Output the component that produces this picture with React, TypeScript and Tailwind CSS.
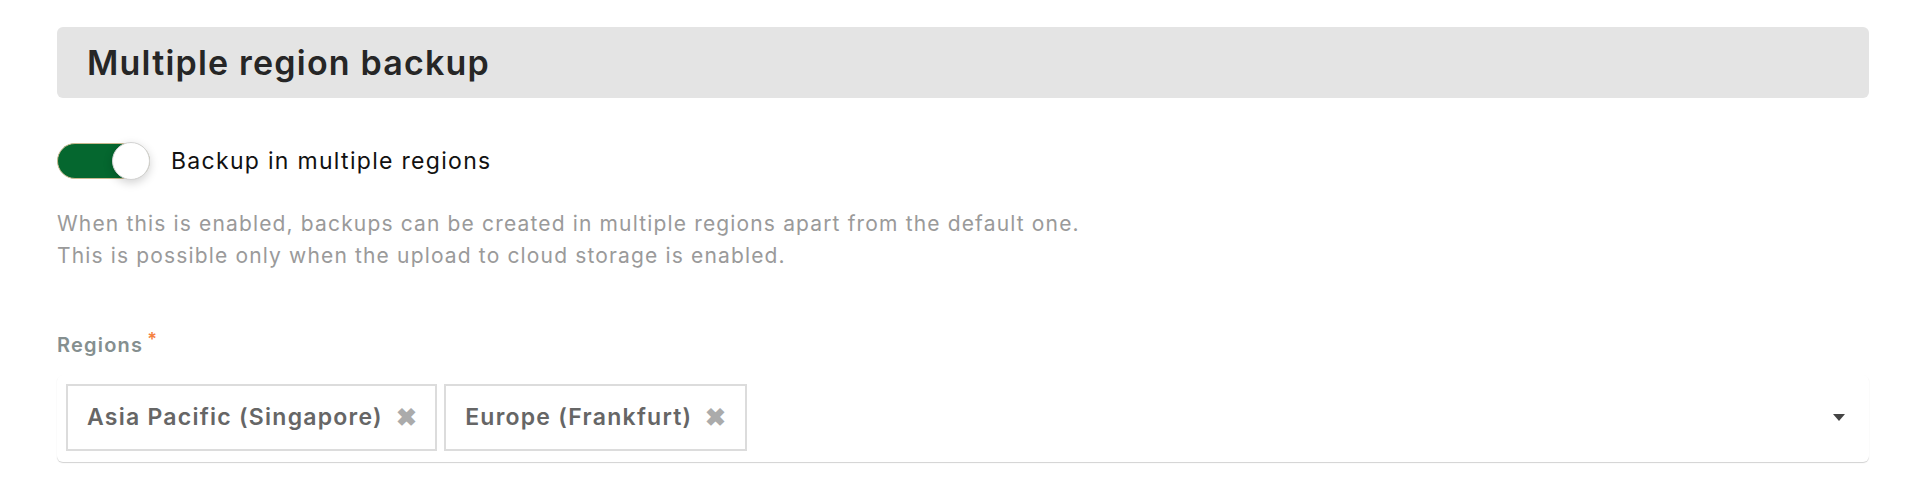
import { useState } from 'react';

const regions = ['Asia Pacific (Singapore)', 'Europe (Frankfurt)'];

const Toggle = ({ on, onChange }: { on: boolean; onChange: () => void }) => (
  <button
    type="button"
    onClick={onChange}
    aria-pressed={on}
    className={`relative h-[36px] w-[93px] shrink-0 rounded-full border border-[#c9b98f] ${on ? 'bg-[#05672f]' : 'bg-[#ccc]'}`}
  >
    <span
      className={`absolute top-[-2px] h-[38px] w-[38px] rounded-full border border-[#d4d4d4] bg-white shadow-[0_3px_10px_rgba(0,0,0,0.18)] ${on ? 'right-[-1px]' : 'left-[-1px]'}`}
    />
  </button>
);

export default function App() {
  const [enabled, setEnabled] = useState(true);
  const [selected, setSelected] = useState(regions);

  return (
    <div className="min-h-screen bg-white px-[57px] pt-[27px] font-['Inter','Noto_Sans',sans-serif]">
      <div className="flex h-[71px] items-center rounded-[6px] bg-[#e4e4e4] pl-[30px]">
        <h2 className="text-[34px] font-semibold tracking-[1.2px] text-[#262626]">Multiple region backup</h2>
      </div>

      <div className="mt-[45px] flex items-center gap-[21px]">
        <Toggle on={enabled} onChange={() => setEnabled(!enabled)} />
        <span className="text-[23px] tracking-[1.3px] text-[#111]">Backup in multiple regions</span>
      </div>

      <p className="mt-[29px] text-[21px] leading-[32px] tracking-[1.15px] text-[#9a9a9a]">
        When this is enabled, backups can be created in multiple regions apart from the default one.
        <br />
        This is possible only when the upload to cloud storage is enabled.
      </p>

      <div className="mt-[59px] flex items-start text-[20px] font-semibold leading-[28px] tracking-[1.2px] text-[#858f8f]">
        Regions
        <span className="ml-[4px] text-[18px] leading-[18px] text-[#f5813f]">*</span>
      </div>

      <div className="mt-[16px] flex items-center rounded-[6px] pt-[9px] pb-[11px] pl-[9px] pr-[24px] shadow-[0_1px_1px_rgba(0,0,0,0.18)]">
        <div className="flex flex-1 gap-[7px]">
          {selected.map((r) => (
            <div
              key={r}
              className="flex h-[67px] items-center border-2 border-[#dcdcdc] pl-[19px] pr-[17px] text-[23px] font-semibold tracking-[1.25px] text-[#666]"
            >
              {r}
              <button
                type="button"
                onClick={() => setSelected(selected.filter((s) => s !== r))}
                className="ml-[13px] text-[25px] leading-none text-[#ababab]"
              >
                ✖
              </button>
            </div>
          ))}
        </div>
        <svg width="12" height="7" viewBox="0 0 12 7" className="fill-[#444]">
          <path d="M0 0h12L6 7z" />
        </svg>
      </div>
    </div>
  );
}
